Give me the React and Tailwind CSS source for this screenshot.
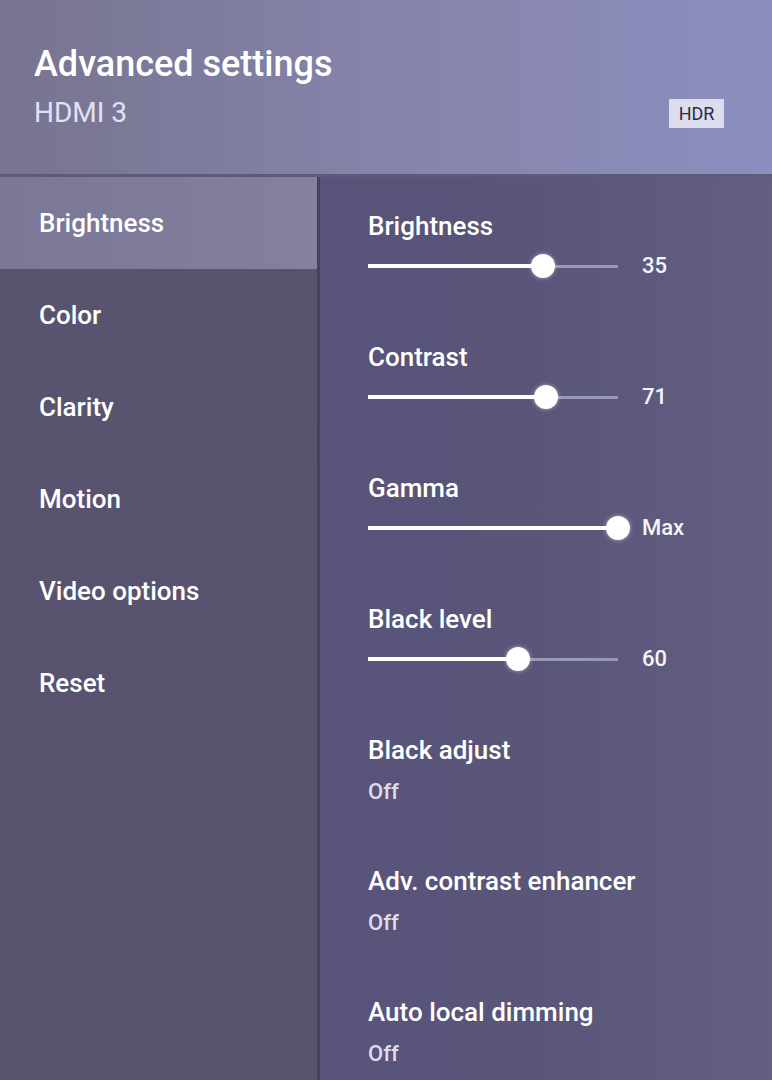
import React from 'react';

const menu = ['Brightness', 'Color', 'Clarity', 'Motion', 'Video options', 'Reset'];

const settings = [
  { label: 'Brightness', type: 'slider', pct: 70, value: '35' },
  { label: 'Contrast', type: 'slider', pct: 71, value: '71' },
  { label: 'Gamma', type: 'slider', pct: 100, value: 'Max' },
  { label: 'Black level', type: 'slider', pct: 60, value: '60' },
  { label: 'Black adjust', type: 'option', value: 'Off' },
  { label: 'Adv. contrast enhancer', type: 'option', value: 'Off' },
  { label: 'Auto local dimming', type: 'option', value: 'Off' },
];

function Slider({ pct, value }) {
  return (
    <div className="mt-[12px] flex h-6 items-center gap-[24px]">
      <div className="relative h-6 w-[250px]">
        <div className="absolute left-0 right-0 top-[11px] h-[3px] bg-[#9a98b9]" />
        <div
          className="absolute left-0 top-[10px] h-[4px] bg-white"
          style={{ width: `${pct}%` }}
        />
        <div
          className="absolute top-0 h-6 w-6 -translate-x-1/2 rounded-full bg-white shadow-[0_0_4px_rgba(255,255,255,0.5)]"
          style={{ left: `${pct}%` }}
        />
      </div>
      <span className="text-[22px] font-medium leading-6 text-[#f4f4fa]">{value}</span>
    </div>
  );
}

export default function App() {
  return (
    <div
      className="flex h-[1080px] w-[772px] flex-col overflow-hidden bg-[#57536f]"
      style={{ fontFamily: 'Roboto, "Noto Sans", sans-serif' }}
    >
      {/* header */}
      <div className="h-[174px] shrink-0 bg-linear-to-r from-[#777490] via-[#8584aa] to-[#8c8ebf] pl-[34px] pr-[48px] pt-[42px]">
        <div className="text-[36px] font-medium leading-[44px] text-white">Advanced settings</div>
        <div className="mt-[11px] flex h-[32px] items-center justify-between">
          <span className="text-[28px] leading-[32px] text-[#e2e1f2]">HDMI 3</span>
          <span className="flex h-[29px] w-[55px] items-center justify-center bg-[#dddcef] text-[18px] text-[#2b2a40]">
            HDR
          </span>
        </div>
      </div>
      <div className="h-[3px] shrink-0 bg-[#5e5b79]" />

      <div className="flex flex-1">
        {/* left menu */}
        <div className="w-[320px] shrink-0 border-r-[3px] border-[#46425c] bg-linear-to-b from-[#58546f] to-[#57536f]">
          {menu.map((item, i) => (
            <div
              key={item}
              className={
                'flex h-[92px] items-center pl-[39px] text-[26px] font-medium text-white ' +
                (i === 0 ? 'bg-linear-to-r from-[#7a7797] to-[#84819f]' : '')
              }
            >
              {item}
            </div>
          ))}
        </div>

        {/* right panel */}
        <div className="flex-1 bg-linear-to-r from-[#57537a] via-[#5a5679] to-[#625f82] pl-[48px] pt-[33px]">
          {settings.map((s) => (
            <div key={s.label} className="h-[131px]">
              <div className="text-[26px] font-medium leading-[32px] text-white">{s.label}</div>
              {s.type === 'slider' ? (
                <Slider pct={s.pct} value={s.value} />
              ) : (
                <div className="mt-[12px] text-[22px] font-medium leading-[28px] text-[#dedcee]">
                  {s.value}
                </div>
              )}
            </div>
          ))}
        </div>
      </div>
    </div>
  );
}
